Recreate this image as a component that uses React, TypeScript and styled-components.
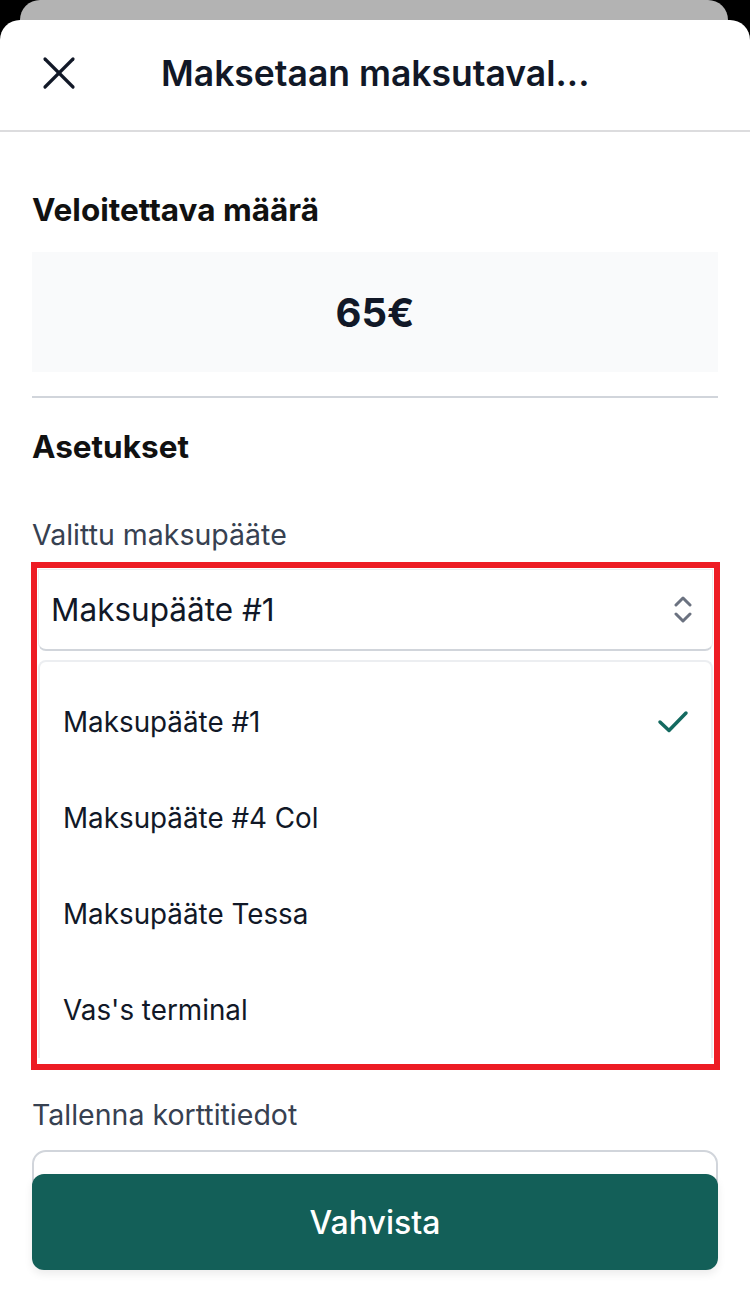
import React from "react";
import styled, { createGlobalStyle } from "styled-components";

const Global = createGlobalStyle`
  html, body { margin: 0; padding: 0; background: #000; }
  body { font-family: Inter, "Noto Sans", "Liberation Sans", sans-serif; -webkit-font-smoothing: antialiased; }
  * { box-sizing: border-box; }
`;

const Screen = styled.div`
  width: 750px;
  height: 1294px;
  background: #000;
  display: flex;
  flex-direction: column;
  overflow: hidden;
`;

const BackSheet = styled.div`
  height: 20px;
  margin: 0 22px 0 20px;
  background: #b3b3b3;
  border-radius: 20px 20px 0 0;
  flex: none;
`;

const Sheet = styled.div`
  position: relative;
  flex: 1;
  background: #fff;
  border-radius: 20px 20px 0 0;
  overflow: hidden;
  display: flex;
  flex-direction: column;
`;

const Header = styled.header`
  height: 112px;
  flex: none;
  display: flex;
  align-items: center;
  padding: 0 0 4px 42px;
  border-bottom: 2px solid #dcdcde;
  gap: 85px;
`;

const CloseButton = styled.button`
  width: 34px;
  height: 34px;
  padding: 0;
  border: none;
  background: none;
  display: flex;
  align-items: center;
  justify-content: center;
  color: #111827;
`;

const Title = styled.h1`
  margin: 0;
  font-size: 35.5px;
  font-weight: 600;
  color: #111827;
  letter-spacing: 0;
  white-space: nowrap;
`;

const Content = styled.main`
  padding: 60px 32px 0;
  display: flex;
  flex-direction: column;
`;

const SectionTitle = styled.h2<{ $top?: number }>`
  margin: ${(p) => p.$top ?? 0}px 0 0;
  font-size: 31.5px;
  line-height: 36px;
  font-weight: 700;
  color: #111;
`;

const AmountBox = styled.div`
  margin-top: 24px;
  height: 120px;
  background: #f9fafb;
  display: flex;
  align-items: center;
  justify-content: center;
  font-size: 40px;
  font-weight: 700;
  color: #111827;
`;

const Divider = styled.hr`
  margin: 24px 0 0;
  border: none;
  height: 2px;
  background: #d1d5db;
`;

const FieldLabel = styled.label<{ $top: number }>`
  display: block;
  margin-top: ${(p) => p.$top}px;
  font-size: 28.5px;
  line-height: 32px;
  color: #374151;
`;

const Highlight = styled.div`
  margin: 11px -2px 0 -1px;
  border: 6px solid #ed1c24;
  padding: 1px 1px 6px;
  display: flex;
  flex-direction: column;
  gap: 9px;
`;

const SelectBox = styled.div`
  height: 82px;
  border: 1px solid #eceef1;
  border-bottom: 2px solid #d1d5db;
  border-radius: 0 0 8px 8px;
  display: flex;
  align-items: center;
  justify-content: space-between;
  padding: 0 20px 0 12px;
  font-size: 31.5px;
  color: #111827;
`;

const ListBox = styled.ul`
  list-style: none;
  margin: 0;
  padding: 12px 0 0;
  border: 2px solid #eceef1;
  border-bottom: none;
  border-radius: 8px 8px 0 0;
`;

const Option = styled.li`
  height: 96px;
  display: flex;
  align-items: center;
  justify-content: space-between;
  padding: 0 22px 0 23px;
  font-size: 27.8px;
  color: #111827;
`;

const InputBox = styled.div`
  margin-top: 19px;
  height: 90px;
  border: 2px solid #d1d5db;
  border-radius: 14px;
`;

const Footer = styled.div`
  position: absolute;
  left: 32px;
  right: 32px;
  bottom: 24px;
`;

const PrimaryButton = styled.button`
  width: 100%;
  height: 96px;
  border: none;
  border-radius: 12px;
  background: #135f58;
  color: #fff;
  font-family: inherit;
  font-size: 32px;
  font-weight: 500;
  box-shadow: 0 4px 8px rgba(0, 0, 0, 0.08);
`;

const CloseIcon = () => (
  <svg width="34" height="34" viewBox="0 0 34 34" fill="none" stroke="currentColor" strokeWidth="3.2" strokeLinecap="round">
    <line x1="3" y1="3" x2="31" y2="31" />
    <line x1="31" y1="3" x2="3" y2="31" />
  </svg>
);

const UpDownIcon = () => (
  <svg width="18" height="30" viewBox="0 0 18 30" fill="none" stroke="#6b7280" strokeWidth="3" strokeLinecap="round" strokeLinejoin="round">
    <polyline points="2,10 9,3 16,10" />
    <polyline points="2,19 9,26 16,19" />
  </svg>
);

const CheckIcon = () => (
  <svg width="32" height="24" viewBox="0 0 32 24" fill="none" stroke="#146a60" strokeWidth="3.5" strokeLinecap="round" strokeLinejoin="round">
    <polyline points="3,12 12,20.5 29,3" />
  </svg>
);

const terminals = ["Maksupääte #1", "Maksupääte #4 Col", "Maksupääte Tessa", "Vas's terminal"];

export default function App() {
  const selected = terminals[0];
  return (
    <>
      <Global />
      <Screen>
        <BackSheet />
        <Sheet>
          <Header>
            <CloseButton aria-label="Sulje">
              <CloseIcon />
            </CloseButton>
            <Title>Maksetaan maksutaval...</Title>
          </Header>
          <Content>
            <SectionTitle>Veloitettava määrä</SectionTitle>
            <AmountBox>65€</AmountBox>
            <Divider />
            <SectionTitle $top={31}>Asetukset</SectionTitle>
            <FieldLabel $top={54}>Valittu maksupääte</FieldLabel>
            <Highlight>
              <SelectBox>
                <span>{selected}</span>
                <UpDownIcon />
              </SelectBox>
              <ListBox>
                {terminals.map((t) => (
                  <Option key={t}>
                    <span>{t}</span>
                    {t === selected && <CheckIcon />}
                  </Option>
                ))}
              </ListBox>
            </Highlight>
            <FieldLabel $top={29}>Tallenna korttitiedot</FieldLabel>
            <InputBox />
          </Content>
          <Footer>
            <PrimaryButton>Vahvista</PrimaryButton>
          </Footer>
        </Sheet>
      </Screen>
    </>
  );
}
